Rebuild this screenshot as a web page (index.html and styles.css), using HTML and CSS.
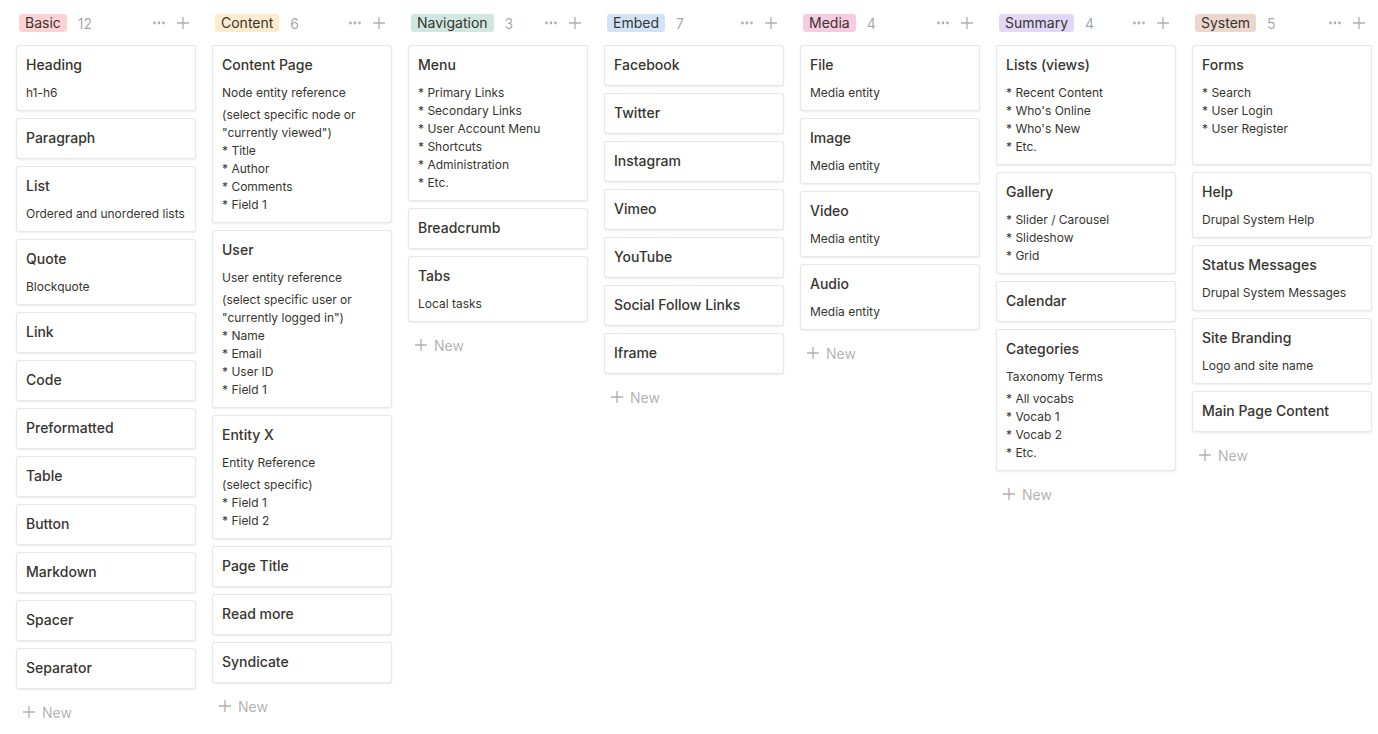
FILE: index.html
```html
<!DOCTYPE html>
<html>
<head>
    <title>Components Board</title>
    <link rel="stylesheet" href="styles.css">
</head>
<body>
    <div class="board">

        <!-- Basic -->
        <div class="column">
            <div class="col-header">
                <span class="tag tag-red">Basic</span>
                <span class="count">12</span>
                <span class="col-actions">
                    <svg class="icon" viewBox="0 0 14 14"><circle cx="2.5" cy="7" r="1.4"/><circle cx="7" cy="7" r="1.4"/><circle cx="11.5" cy="7" r="1.4"/></svg>
                    <svg class="icon plus" viewBox="0 0 14 14"><path d="M7 1v12M1 7h12"/></svg>
                </span>
            </div>
            <div class="card"><div class="card-title">Heading</div><div class="props"><div class="prop">h1-h6</div></div></div>
            <div class="card"><div class="card-title">Paragraph</div></div>
            <div class="card"><div class="card-title">List</div><div class="props"><div class="prop">Ordered and unordered lists</div></div></div>
            <div class="card"><div class="card-title">Quote</div><div class="props"><div class="prop">Blockquote</div></div></div>
            <div class="card"><div class="card-title">Link</div></div>
            <div class="card"><div class="card-title">Code</div></div>
            <div class="card"><div class="card-title">Preformatted</div></div>
            <div class="card"><div class="card-title">Table</div></div>
            <div class="card"><div class="card-title">Button</div></div>
            <div class="card"><div class="card-title">Markdown</div></div>
            <div class="card"><div class="card-title">Spacer</div></div>
            <div class="card"><div class="card-title">Separator</div></div>
            <div class="new-row"><svg class="icon plus" viewBox="0 0 14 14"><path d="M7 1v12M1 7h12"/></svg>New</div>
        </div>

        <!-- Content -->
        <div class="column">
            <div class="col-header">
                <span class="tag tag-yellow">Content</span>
                <span class="count">6</span>
                <span class="col-actions">
                    <svg class="icon" viewBox="0 0 14 14"><circle cx="2.5" cy="7" r="1.4"/><circle cx="7" cy="7" r="1.4"/><circle cx="11.5" cy="7" r="1.4"/></svg>
                    <svg class="icon plus" viewBox="0 0 14 14"><path d="M7 1v12M1 7h12"/></svg>
                </span>
            </div>
            <div class="card">
                <div class="card-title">Content Page</div>
                <div class="props">
                    <div class="prop">Node entity reference</div>
                    <div class="prop">(select specific node or<br>"currently viewed")<br>* Title<br>* Author<br>* Comments<br>* Field 1</div>
                </div>
            </div>
            <div class="card">
                <div class="card-title">User</div>
                <div class="props">
                    <div class="prop">User entity reference</div>
                    <div class="prop">(select specific user or<br>"currently logged in")<br>* Name<br>* Email<br>* User ID<br>* Field 1</div>
                </div>
            </div>
            <div class="card">
                <div class="card-title">Entity X</div>
                <div class="props">
                    <div class="prop">Entity Reference</div>
                    <div class="prop">(select specific)<br>* Field 1<br>* Field 2</div>
                </div>
            </div>
            <div class="card"><div class="card-title">Page Title</div></div>
            <div class="card"><div class="card-title">Read more</div></div>
            <div class="card"><div class="card-title">Syndicate</div></div>
            <div class="new-row"><svg class="icon plus" viewBox="0 0 14 14"><path d="M7 1v12M1 7h12"/></svg>New</div>
        </div>

        <!-- Navigation -->
        <div class="column">
            <div class="col-header">
                <span class="tag tag-green">Navigation</span>
                <span class="count">3</span>
                <span class="col-actions">
                    <svg class="icon" viewBox="0 0 14 14"><circle cx="2.5" cy="7" r="1.4"/><circle cx="7" cy="7" r="1.4"/><circle cx="11.5" cy="7" r="1.4"/></svg>
                    <svg class="icon plus" viewBox="0 0 14 14"><path d="M7 1v12M1 7h12"/></svg>
                </span>
            </div>
            <div class="card">
                <div class="card-title">Menu</div>
                <div class="props">
                    <div class="prop">* Primary Links<br>* Secondary Links<br>* User Account Menu<br>* Shortcuts<br>* Administration<br>* Etc.</div>
                </div>
            </div>
            <div class="card"><div class="card-title">Breadcrumb</div></div>
            <div class="card"><div class="card-title">Tabs</div><div class="props"><div class="prop">Local tasks</div></div></div>
            <div class="new-row"><svg class="icon plus" viewBox="0 0 14 14"><path d="M7 1v12M1 7h12"/></svg>New</div>
        </div>

        <!-- Embed -->
        <div class="column">
            <div class="col-header">
                <span class="tag tag-blue">Embed</span>
                <span class="count">7</span>
                <span class="col-actions">
                    <svg class="icon" viewBox="0 0 14 14"><circle cx="2.5" cy="7" r="1.4"/><circle cx="7" cy="7" r="1.4"/><circle cx="11.5" cy="7" r="1.4"/></svg>
                    <svg class="icon plus" viewBox="0 0 14 14"><path d="M7 1v12M1 7h12"/></svg>
                </span>
            </div>
            <div class="card"><div class="card-title">Facebook</div></div>
            <div class="card"><div class="card-title">Twitter</div></div>
            <div class="card"><div class="card-title">Instagram</div></div>
            <div class="card"><div class="card-title">Vimeo</div></div>
            <div class="card"><div class="card-title">YouTube</div></div>
            <div class="card"><div class="card-title">Social Follow Links</div></div>
            <div class="card"><div class="card-title">Iframe</div></div>
            <div class="new-row"><svg class="icon plus" viewBox="0 0 14 14"><path d="M7 1v12M1 7h12"/></svg>New</div>
        </div>

        <!-- Media -->
        <div class="column">
            <div class="col-header">
                <span class="tag tag-pink">Media</span>
                <span class="count">4</span>
                <span class="col-actions">
                    <svg class="icon" viewBox="0 0 14 14"><circle cx="2.5" cy="7" r="1.4"/><circle cx="7" cy="7" r="1.4"/><circle cx="11.5" cy="7" r="1.4"/></svg>
                    <svg class="icon plus" viewBox="0 0 14 14"><path d="M7 1v12M1 7h12"/></svg>
                </span>
            </div>
            <div class="card"><div class="card-title">File</div><div class="props"><div class="prop">Media entity</div></div></div>
            <div class="card"><div class="card-title">Image</div><div class="props"><div class="prop">Media entity</div></div></div>
            <div class="card"><div class="card-title">Video</div><div class="props"><div class="prop">Media entity</div></div></div>
            <div class="card"><div class="card-title">Audio</div><div class="props"><div class="prop">Media entity</div></div></div>
            <div class="new-row"><svg class="icon plus" viewBox="0 0 14 14"><path d="M7 1v12M1 7h12"/></svg>New</div>
        </div>

        <!-- Summary -->
        <div class="column">
            <div class="col-header">
                <span class="tag tag-purple">Summary</span>
                <span class="count">4</span>
                <span class="col-actions">
                    <svg class="icon" viewBox="0 0 14 14"><circle cx="2.5" cy="7" r="1.4"/><circle cx="7" cy="7" r="1.4"/><circle cx="11.5" cy="7" r="1.4"/></svg>
                    <svg class="icon plus" viewBox="0 0 14 14"><path d="M7 1v12M1 7h12"/></svg>
                </span>
            </div>
            <div class="card">
                <div class="card-title">Lists (views)</div>
                <div class="props"><div class="prop">* Recent Content<br>* Who's Online<br>* Who's New<br>* Etc.</div></div>
            </div>
            <div class="card">
                <div class="card-title">Gallery</div>
                <div class="props"><div class="prop">* Slider / Carousel<br>* Slideshow<br>* Grid</div></div>
            </div>
            <div class="card"><div class="card-title">Calendar</div></div>
            <div class="card">
                <div class="card-title">Categories</div>
                <div class="props">
                    <div class="prop">Taxonomy Terms</div>
                    <div class="prop">* All vocabs<br>* Vocab 1<br>* Vocab 2<br>* Etc.</div>
                </div>
            </div>
            <div class="new-row"><svg class="icon plus" viewBox="0 0 14 14"><path d="M7 1v12M1 7h12"/></svg>New</div>
        </div>

        <!-- System -->
        <div class="column">
            <div class="col-header">
                <span class="tag tag-brown">System</span>
                <span class="count">5</span>
                <span class="col-actions">
                    <svg class="icon" viewBox="0 0 14 14"><circle cx="2.5" cy="7" r="1.4"/><circle cx="7" cy="7" r="1.4"/><circle cx="11.5" cy="7" r="1.4"/></svg>
                    <svg class="icon plus" viewBox="0 0 14 14"><path d="M7 1v12M1 7h12"/></svg>
                </span>
            </div>
            <div class="card">
                <div class="card-title">Forms</div>
                <div class="props"><div class="prop">* Search<br>* User Login<br>* User Register<br>&nbsp;</div></div>
            </div>
            <div class="card"><div class="card-title">Help</div><div class="props"><div class="prop">Drupal System Help</div></div></div>
            <div class="card"><div class="card-title">Status Messages</div><div class="props"><div class="prop">Drupal System Messages</div></div></div>
            <div class="card"><div class="card-title">Site Branding</div><div class="props"><div class="prop">Logo and site name</div></div></div>
            <div class="card"><div class="card-title">Main Page Content</div></div>
            <div class="new-row"><svg class="icon plus" viewBox="0 0 14 14"><path d="M7 1v12M1 7h12"/></svg>New</div>
        </div>

    </div>
</body>
</html>
```

FILE: styles.css
```css
body {
    margin: 0;
    background: #fff;
    font-family: Inter, 'Noto Sans', 'Liberation Sans', sans-serif;
    color: rgb(55, 53, 47);
    overflow: hidden;
}
.board {
    display: flex;
    gap: 16px;
    padding: 14px 0 0 16px;
}
.column {
    width: 180px;
    flex-shrink: 0;
    display: flex;
    flex-direction: column;
    gap: 7px;
}
.col-header {
    display: flex;
    align-items: center;
    height: 18px;
    padding: 0 6px 0 3px;
    margin-bottom: 6px;
}
.tag {
    font-size: 14px;
    line-height: 18px;
    padding: 0 6px;
    border-radius: 3px;
    white-space: nowrap;
}
.tag-red { background: #ffd1d5; }
.tag-yellow { background: #fcebcc; }
.tag-green { background: #cfe7df; }
.tag-blue { background: #d0e3f7; }
.tag-pink { background: #f8cbe0; }
.tag-purple { background: #e2d7f7; }
.tag-brown { background: #ecd7cf; }
.count {
    font-size: 14px;
    color: rgba(55, 53, 47, 0.45);
    margin-left: 11px;
}
.col-actions {
    margin-left: auto;
    display: flex;
    align-items: center;
    gap: 10px;
}
.icon {
    width: 14px;
    height: 14px;
    fill: rgba(55, 53, 47, 0.4);
}
.icon.plus {
    fill: none;
    stroke: rgba(55, 53, 47, 0.4);
    stroke-width: 1.3;
}
.card {
    background: #fff;
    border: 1px solid rgba(15, 15, 15, 0.1);
    border-radius: 3px;
    box-shadow: 0 1px 2px rgba(15, 15, 15, 0.08);
    padding: 9px 9px 10px;
}
.card-title {
    font-size: 14px;
    font-weight: 500;
    line-height: 20px;
    white-space: nowrap;
}
.props {
    margin: 9px 0 -2px;
    display: flex;
    flex-direction: column;
    gap: 4px;
}
.prop {
    font-size: 12px;
    line-height: 18px;
    white-space: nowrap;
}
.new-row {
    display: flex;
    align-items: center;
    gap: 6px;
    height: 32px;
    padding-left: 6px;
    font-size: 14px;
    color: rgba(55, 53, 47, 0.4);
}
```
